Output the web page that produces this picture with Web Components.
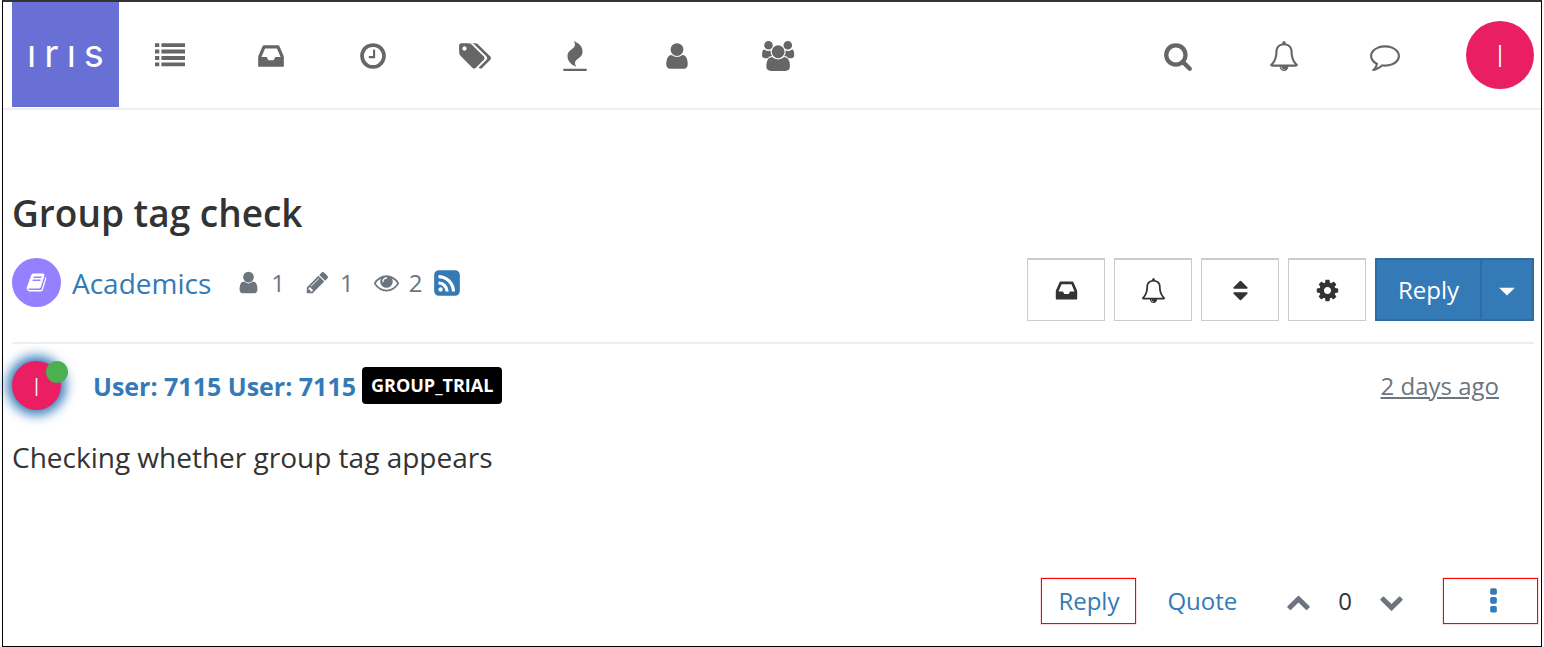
<!DOCTYPE html>
<html lang="en">
<head>
<meta charset="utf-8">
<title>Group tag check | iris</title>
<style>
  body { margin: 0; background: #fff; color: #333; font-family: "Open Sans", "Noto Sans", sans-serif; }
</style>
</head>
<body>
<forum-app></forum-app>

<script>
const dot = y => `M1088 ${y}v192q0 40-28 68t-68 28h-192q-40 0-68-28t-28-68v-192q0-40 28-68t68-28h192q40 0 68 28t28 68z`;
const row = y => `M0 ${y}h256v232h-256zM384 ${y}h1408v232h-1408z`;

// Glyphs on a 1792-unit em; wide ones use a 2048-unit box.
const ICONS = {
  list: row(128) + row(512) + row(896) + row(1280),
  inbox: "M1151 960h316q-1-3-2.5-8.5t-2.5-7.5l-212-496h-708l-212 496q-1 3-2.5 8.5t-2.5 7.5h316l95 192h320zm513 30v482q0 26-19 45t-45 19h-1408q-26 0-45-19t-19-45v-482q0-62 25-123l238-552q10-25 36.5-42t52.5-17h832q26 0 52.5 17t36.5 42l238 552q25 61 25 123z",
  clock: "M1024 544v448q0 14-9 23t-23 9h-320q-14 0-23-9t-9-23v-64q0-14 9-23t23-9h224v-352q0-14 9-23t23-9h64q14 0 23 9t9 23zm416 352q0-148-73-273t-198-198-273-73-273 73-198 198-73 273 73 273 198 198 273 73 273-73 198-198 73-273zm224 0q0 209-103 385.5t-279.5 279.5-385.5 103-385.5-103-279.5-279.5-103-385.5 103-385.5 279.5-279.5 385.5-103 385.5 103 279.5 279.5 103 385.5z",
  tags: "M576 448q0-53-37.5-90.5t-90.5-37.5-90.5 37.5-37.5 90.5 37.5 90.5 90.5 37.5 90.5-37.5 37.5-90.5zm1067 576q0 53-37 90l-491 492q-39 37-91 37-53 0-90-37l-715-716q-38-37-64.5-101t-26.5-117v-416q0-52 38-90t90-38h416q53 0 117 26.5t102 64.5l715 714q37 39 37 91zm384 0q0 53-37 90l-491 492q-39 37-91 37-36 0-59-14t-53-45l470-470q37-37 37-90 0-52-37-91l-715-714q-38-38-102-64.5t-117-26.5h224q53 0 117 26.5t102 64.5l715 714q37 39 37 91z",
  fire: "M1600 1696v64q0 13-9.5 22.5t-22.5 9.5h-1344q-13 0-22.5-9.5t-9.5-22.5v-64q0-13 9.5-22.5t22.5-9.5h1344q13 0 22.5 9.5t9.5 22.5zm-256-1056q0 78-24.5 144t-64 112.5-87.5 88-96 77.5-87.5 72-64 81.5-24.5 96.5q0 96 67 224l-4-1 1 1q-90-41-160-83t-138.5-100-113.5-122.5-72.5-150.5-27.5-184q0-78 24.5-144t64-112.5 87.5-88 96-77.5 87.5-72 64-81.5 24.5-96.5q0-94-66-224l3 1-1-1q90 41 160 83t138.5 100 113.5 122.5 72.5 150.5 27.5 184z",
  user: "M1536 1399q0 109-62.5 187t-150.5 78h-854q-88 0-150.5-78t-62.5-187q0-85 8.5-160.5t31.5-152 58.5-131 94-89 134.5-34.5q131 128 313 128t313-128q76 0 134.5 34.5t94 89 58.5 131 31.5 152 8.5 160.5zm-256-887q0 159-112.5 271.5t-271.5 112.5-271.5-112.5-112.5-271.5 112.5-271.5 271.5-112.5 271.5 112.5 112.5 271.5z",
  users: "M657 896q-162 5-265 128h-134q-82 0-138-40.5t-56-118.5q0-353 124-353 6 0 43.5 21t97.5 42.5 119 21.5q67 0 133-23-5 37-5 66 0 139 81 256zm1071 637q0 120-73 189.5t-194 69.5h-874q-121 0-194-69.5t-73-189.5q0-53 3.5-103.5t14-109 26.5-108.5 43-97.5 62-81 85.5-53.5 111.5-20q10 0 43 21.5t73 48 107 48 135 21.5 135-21.5 107-48 73-48 43-21.5q61 0 111.5 20t85.5 53.5 62 81 43 97.5 26.5 108.5 14 109 3.5 103.5zm-1024-1277q0 106-75 181t-181 75-181-75-75-181 75-181 181-75 181 75 75 181zm704 384q0 159-112.5 271.5t-271.5 112.5-271.5-112.5-112.5-271.5 112.5-271.5 271.5-112.5 271.5 112.5 112.5 271.5zm576 225q0 78-56 118.5t-138 40.5h-134q-103-123-265-128 81-117 81-256 0-29-5-66 66 23 133 23 59 0 119-21.5t97.5-42.5 43.5-21q124 0 124 353zm-128-609q0 106-75 181t-181 75-181-75-75-181 75-181 181-75 181 75 75 181z",
  search: "M1216 832q0-185-131.5-316.5t-316.5-131.5-316.5 131.5-131.5 316.5 131.5 316.5 316.5 131.5 316.5-131.5 131.5-316.5zm512 832q0 52-38 90t-90 38q-54 0-90-38l-343-342q-179 124-399 124-143 0-273.5-55.5t-225-150-150-225-55.5-273.5 55.5-273.5 150-225 225-150 273.5-55.5 273.5 55.5 225 150 150 225 55.5 273.5q0 220-124 399l343 343q37 37 37 90z",
  bell: "M912 1696q0-16-16-16-59 0-101.5-42.5t-42.5-101.5q0-16-16-16t-16 16q0 73 51.5 124.5t124.5 51.5q16 0 16-16zm-666-288h1300q-266-300-266-832 0-51-24-105t-69-103-121.5-80.5-169.5-31.5-169.5 31.5-121.5 80.5-69 103-24 105q0 532-266 832zm1482 0q0 52-38 90t-90 38h-448q0 106-75 181t-181 75-181-75-75-181h-448q-52 0-90-38t-38-90q50-42 91-88t85-119.5 74.5-158.5 50-206 19.5-260q0-152 117-282.5t307-158.5q-8-19-8-39 0-40 28-68t68-28 68 28 28 68q0 20-8 39 190 28 307 158.5t117 282.5q0 139 19.5 260t50 206 74.5 158.5 85 119.5 91 88z",
  comment: "M896 384q-204 0-381.5 69.5t-282 187.5-104.5 255q0 112 71.5 213.5t201.5 175.5l87 50-27 96q-24 91-70 172 152-63 275-171l43-38 57 6q69 8 130 8 204 0 381.5-69.5t282-187.5 104.5-255-104.5-255-282-187.5-381.5-69.5zm896 512q0 174-120 321.5t-326 233-450 85.5q-70 0-145-8-198 175-460 242-49 14-114 22h-5q-15 0-27-10.5t-16-27.5v-1q-3-4-.5-12t2-10 4.5-9.5l6-9 7-8.5 8-9q7-8 31-34.5t34.5-38 31-39.5 32.5-51 27-59 26-76q-157-89-247.5-220t-90.5-281q0-174 120-321.5t326-233 450-85.5 450 85.5 326 233 120 321.5z",
  book: "M1703 478q40 57 18 129l-275 906q-19 64-76.5 107.5t-122.5 43.5h-923q-77 0-148.5-53.5t-99.5-131.5q-24-67-2-127 0-4 3-27t4-37q1-8-3-21.5t-3-19.5q2-11 8-21t16.5-23.5 16.5-23.5q23-38 45-91.5t30-91.5q3-10 .5-30t-.5-28q3-11 17-28t17-23q21-36 42-92t25-90q1-9-2.5-32t.5-28q4-13 22-30.5t22-22.5q19-26 42.5-84.5t27.5-96.5q1-8-3-25.5t-2-26.5q2-8 9-18t18-23 17-21q8-12 16.5-30.5t15-35 16-36 19.5-32 26.5-23.5 36-11.5 47.5 5.5l-1 3q38-9 51-9h761q74 0 114 56t18 130l-274 906q-36 119-71.5 153.5t-128.5 34.5h-869q-27 0-38 15-11 16-1 43 24 70 144 70h923q29 0 56-15.5t35-41.5l300-987q7-22 5-57 38 15 59 43zm-1064 2q-4 13 2 22.5t20 9.5h608q13 0 25.5-9.5t16.5-22.5l21-64q4-13-2-22.5t-20-9.5h-608q-13 0-25.5 9.5t-16.5 22.5zm-83 256q-4 13 2 22.5t20 9.5h608q13 0 25.5-9.5t16.5-22.5l21-64q4-13-2-22.5t-20-9.5h-608q-13 0-25.5 9.5t-16.5 22.5z",
  pencil: "M491 1536l91-91-235-235-91 91v107h128v128h107zm523-928q0-22-22-22-10 0-17 7l-542 542q-7 7-7 17 0 22 22 22 10 0 17-7l542-542q7-7 7-17zm-54-192l416 416-832 832h-416v-416zm683 96q0 53-37 90l-166 166-416-416 166-165q36-38 90-38 53 0 91 38l235 234q37 39 37 91z",
  eye: "M1664 960q-152-236-381-353 61 104 61 225 0 185-131.5 316.5t-316.5 131.5-316.5-131.5-131.5-316.5q0-121 61-225-229 117-381 353 133 205 333.5 326.5t434.5 121.5 434.5-121.5 333.5-326.5zm-720-384q0-20-14-34t-34-14q-125 0-214.5 89.5t-89.5 214.5q0 20 14 34t34 14 34-14 14-34q0-86 61-147t147-61q20 0 34-14t14-34zm848 384q0 34-20 69-140 230-376.5 368.5t-499.5 138.5-499.5-139-376.5-368q-20-35-20-69t20-69q140-229 376.5-368t499.5-139 499.5 139 376.5 368q20 35 20 69z",
  rss: "M640 1280q0-53-37.5-90.5t-90.5-37.5-90.5 37.5-37.5 90.5 37.5 90.5 90.5 37.5 90.5-37.5 37.5-90.5zm351 94q-13-232-177-396t-396-177q-14-1-24 9t-10 23v128q0 13 8.5 22t21.5 10q154 11 264 121t121 264q1 13 10 21.5t22 8.5h128q13 0 23-10t9-24zm384 1q-5-154-56-297.5t-139.5-260-205-205-260-139.5-297.5-56q-14-1-23 9-10 10-10 23v128q0 13 9 22t22 10q204 7 378 111.5t278.5 278.5 111.5 378q1 13 10 22t22 9h128q13 0 23-10 11-9 9-23zm289-959v960q0 119-84.5 203.5t-203.5 84.5h-960q-119 0-203.5-84.5t-84.5-203.5v-960q0-119 84.5-203.5t203.5-84.5h960q119 0 203.5 84.5t84.5 203.5z",
  cog: "M1152 896q0-106-75-181t-181-75-181 75-75 181 75 181 181 75 181-75 75-181zm512-109v222q0 12-8 23t-20 13l-185 28q-19 54-39 91 35 50 107 138 10 12 10 25t-9 23q-27 37-99 108t-94 71q-12 0-26-9l-138-108q-44 23-91 38-16 136-29 186-7 28-36 28h-222q-14 0-24.5-8.5t-11.5-21.5l-28-184q-49-16-90-37l-141 107q-10 9-25 9-14 0-25-11-126-114-165-168-7-10-7-23 0-12 8-23 15-21 51-66.5t54-70.5q-27-50-41-99l-183-27q-13-2-21-12.5t-8-23.5v-222q0-12 8-23t19-13l186-28q14-46 39-92-40-57-107-138-10-12-10-24 0-10 9-23 26-36 98.5-107.5t94.5-71.5q13 0 26 10l138 107q44-23 91-38 16-136 29-186 7-28 36-28h222q14 0 24.5 8.5t11.5 21.5l28 184q49 16 90 37l142-107q9-9 24-9 13 0 25 10 129 119 165 170 7 8 7 22 0 12-8 23-15 21-51 66.5t-54 70.5q26 50 41 98l183 28q13 2 21 12.5t8 23.5z",
  sort: "M1408 1088q0 26-19 45l-448 448q-19 19-45 19t-45-19l-448-448q-19-19-19-45t19-45 45-19h896q26 0 45 19t19 45zm0-384q0 26-19 45t-45 19h-896q-26 0-45-19t-19-45 19-45l448-448q19-19 45-19t45 19l448 448q19 19 19 45z",
  caret: "M256 704h1280l-640 640z",
  up: "M1683 1331l-166 165q-19 19-45 19t-45-19l-531-531-531 531q-19 19-45 19t-45-19l-166-165q-19-19-19-45.5t19-45.5l742-741q19-19 45-19t45 19l742 741q19 19 19 45.5t-19 45.5z",
  down: "M1683 808l-742 741q-19 19-45 19t-45-19l-742-741q-19-19-19-45.5t19-45.5l166-165q19-19 45-19t45 19l531 531 531-531q19-19 45-19t45 19l166 165q19 19 19 45.5t-19 45.5z",
  dots: dot(1248) + dot(736) + dot(224)
};
const WIDE = new Set(["tags", "users"]);

const define = (name, html) => customElements.define(name, class extends HTMLElement {
  constructor() {
    super();
    this.attachShadow({ mode: "open" }).innerHTML = html;
  }
});

customElements.define("fa-icon", class extends HTMLElement {
  connectedCallback() {
    const name = this.getAttribute("name");
    const w = WIDE.has(name) ? 2048 : 1792;
    if (!this.shadowRoot) this.attachShadow({ mode: "open" });
    this.shadowRoot.innerHTML = `
      <style>
        :host { display: block; flex: none; }
        svg { display: block; height: var(--icon-size, 25px); fill: currentColor; }
      </style>
      <svg viewBox="0 0 ${w} 1792" aria-hidden="true"><path d="${ICONS[name]}"/></svg>`;
  }
});

define("iris-logo", `
  <style>
    :host { display: block; }
    a { display: flex; align-items: center; justify-content: center; gap: 8px; box-sizing: border-box;
        width: 107px; height: 105px; padding-bottom: 4px;
        background: #6870d6; color: #fff; text-decoration: none;
        font: 400 38px/38px Inter, sans-serif; }
  </style>
  <a href="#" aria-label="iris"><span>ı</span><span>r</span><span>ı</span><span>s</span></a>`);

define("user-avatar", `
  <style>
    :host { display: flex; align-items: center; justify-content: center; flex: none; box-sizing: border-box;
            width: var(--avatar-size, 49px); height: var(--avatar-size, 49px); border-radius: 50%;
            background: #e91e63; color: #fff; font-size: var(--avatar-font, 26px); font-weight: 300; line-height: 1; position: relative; }
    :host([glow]) { box-shadow: 0 0 12px 5px #337ab7; }
    :host([online])::after { content: ""; position: absolute; top: 0; right: -7px; width: 22px; height: 22px;
            border-radius: 50%; background: #4caf50; }
  </style>
  <slot></slot>`);

define("nav-item", `
  <style>
    :host { display: block; }
    a { display: flex; align-items: center; justify-content: center; height: 108px; color: #666; --icon-size: 30px; }
  </style>
  <a href="#"><slot></slot></a>`);

define("site-header", `
  <style>
    :host { display: block; border-bottom: 2px solid #eee; }
    header { display: flex; align-items: flex-start; justify-content: space-between; height: 106px; padding: 0 7px 0 9px; }
    .left { display: flex; }
    nav { display: grid; }
    .main { grid-template-columns: repeat(7, 1fr); width: 710px; }
    .tools { grid-template-columns: 110px 101px 101px 31px auto; align-items: start; }
    .me { grid-column: 5; margin-top: 19px; color: inherit; text-decoration: none; }
    user-avatar { --avatar-size: 68px; --avatar-font: 32px; }
  </style>
  <header>
    <div class="left">
      <iris-logo></iris-logo>
      <nav class="main" aria-label="Main">
        <nav-item><fa-icon name="list"></fa-icon></nav-item>
        <nav-item><fa-icon name="inbox"></fa-icon></nav-item>
        <nav-item><fa-icon name="clock"></fa-icon></nav-item>
        <nav-item><fa-icon name="tags"></fa-icon></nav-item>
        <nav-item><fa-icon name="fire"></fa-icon></nav-item>
        <nav-item><fa-icon name="user"></fa-icon></nav-item>
        <nav-item><fa-icon name="users"></fa-icon></nav-item>
      </nav>
    </div>
    <nav class="tools" aria-label="Account">
      <nav-item><fa-icon name="search"></fa-icon></nav-item>
      <nav-item><fa-icon name="bell"></fa-icon></nav-item>
      <nav-item><fa-icon name="comment"></fa-icon></nav-item>
      <a class="me" href="#"><user-avatar>I</user-avatar></a>
    </nav>
  </header>`);

define("topic-stats", `
  <style>
    :host { display: flex; align-items: center; color: #6c757d; font-size: 24px; line-height: 48px; }
    .category { display: flex; align-items: center; gap: 11px; margin-right: 25px; color: #337ab7; font-size: 28px; text-decoration: none; }
    .disc { display: flex; align-items: center; justify-content: center; width: 49px; height: 49px; border-radius: 50%;
            background: #9580ff; color: #fff; --icon-size: 21px; }
    .stat { display: flex; align-items: center; gap: 10px; margin-right: 20px; }
    .stat:last-of-type { margin-right: 10px; }
    .feed { color: #337ab7; --icon-size: 30px; }
  </style>
  <a class="category" href="#"><span class="disc"><fa-icon name="book"></fa-icon></span>Academics</a>
  <span class="stat"><fa-icon name="user"></fa-icon>1</span>
  <span class="stat"><fa-icon name="pencil"></fa-icon>1</span>
  <span class="stat"><fa-icon name="eye"></fa-icon>2</span>
  <a class="feed" href="#" aria-label="Feed"><fa-icon name="rss"></fa-icon></a>`);

define("topic-tools", `
  <style>
    :host { display: flex; gap: 9px; }
    button { display: flex; align-items: center; justify-content: center; box-sizing: border-box; width: 78px; height: 63px;
             margin: 0; padding: 0; border: 1px solid #ccc; border-top-width: 2px; background: #fff; color: #333; font: inherit; font-size: 24px; }
    .split { display: flex; }
    .split button { border: 2px solid #2e6da4; background: #337ab7; color: #fff; }
    .split .reply { width: 105px; border-right: 0; }
    .split .more { width: 54px; --icon-size: 22px; }
  </style>
  <button aria-label="Mark unread"><fa-icon name="inbox"></fa-icon></button>
  <button aria-label="Watch"><fa-icon name="bell"></fa-icon></button>
  <button aria-label="Sort"><fa-icon name="sort"></fa-icon></button>
  <button aria-label="Topic tools"><fa-icon name="cog"></fa-icon></button>
  <div class="split">
    <button class="reply">Reply</button>
    <button class="more" aria-label="More reply options"><fa-icon name="caret"></fa-icon></button>
  </div>`);

define("post-actions", `
  <style>
    :host { display: flex; align-items: center; justify-content: flex-end; font-size: 24px; line-height: 44px; color: #333; }
    a { color: #337ab7; text-decoration: none; }
    button { display: flex; margin: 0; padding: 0; border: 0; background: none; color: #6c757d; }
    .boxed { display: flex; align-items: center; justify-content: center; box-sizing: border-box; width: 95px; height: 46px;
             border: 1px solid #f00; box-shadow: 0 0 0 1px #fdd; }
    .quote { margin: 0 49px 0 31px; }
    .votes { display: flex; align-items: center; gap: 27px; margin-right: 39px; }
    .menu { padding-left: 5px; color: #337ab7; --icon-size: 31px; }
  </style>
  <a class="boxed" href="#">Reply</a>
  <a class="quote" href="#">Quote</a>
  <div class="votes">
    <button aria-label="Upvote"><fa-icon name="up"></fa-icon></button>
    <span>0</span>
    <button aria-label="Downvote"><fa-icon name="down"></fa-icon></button>
  </div>
  <button class="boxed menu" aria-label="Post options"><fa-icon name="dots"></fa-icon></button>`);

define("forum-post", `
  <style>
    :host { display: block; }
    .head { display: flex; align-items: center; padding: 17px 35px 0 0; line-height: 48px; }
    .name { margin: 0 6px 0 32px; color: #337ab7; font-size: 25px; font-weight: 700; text-decoration: none; }
    .group { padding: 0 9px; border-radius: 4px; background: #000; color: #fff; font-size: 18px; line-height: 37px; font-weight: 700; text-decoration: none; }
    .date { margin-left: auto; color: #6c757d; font-size: 24px; }
    p { margin: 27px 0 101px; font-size: 28px; line-height: 40px; }
  </style>
  <div class="head">
    <user-avatar glow online>I</user-avatar>
    <a class="name" href="#">User: 7115 User: 7115</a>
    <a class="group" href="#">GROUP_TRIAL</a>
    <a class="date" href="#">2 days ago</a>
  </div>
  <p><slot></slot></p>`);

define("forum-app", `
  <style>
    :host { display: block; margin: 0 2px; border: 1px solid #000; border-top: 2px solid #333; }
    main { padding: 77px 7px 0 9px; }
    h1 { margin: 0; font-size: 37px; line-height: 52px; font-weight: 600; }
    .bar { display: flex; align-items: flex-start; justify-content: space-between; padding: 19px 0 21px; border-bottom: 2px solid #eee; }
    post-actions { padding: 0 3px 22px 0; }
  </style>
  <site-header></site-header>
  <main>
    <h1>Group tag check</h1>
    <div class="bar"><topic-stats></topic-stats><topic-tools></topic-tools></div>
    <forum-post>Checking whether group tag appears</forum-post>
  </main>
  <post-actions></post-actions>`);
</script>
</body>
</html>
